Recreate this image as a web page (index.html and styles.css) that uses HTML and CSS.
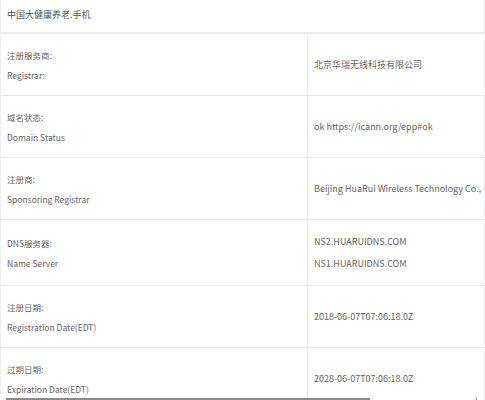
FILE: index.html
```html
<!DOCTYPE html>
<html lang="zh-CN">
<head>
<meta charset="utf-8">
<title>Whois</title>
<link rel="stylesheet" href="styles.css">
</head>
<body>
<div class="page">
  <div class="title">中国大健康养老.手机</div>
  <table class="info">
    <tr>
      <td class="label"><div>注册服务商:</div><div>Registrar:</div></td>
      <td class="value"><div>北京华瑞无线科技有限公司</div></td>
    </tr>
    <tr>
      <td class="label"><div>域名状态:</div><div>Domain Status</div></td>
      <td class="value"><div>ok https://icann.org/epp#ok</div></td>
    </tr>
    <tr>
      <td class="label"><div>注册商:</div><div>Sponsoring Registrar</div></td>
      <td class="value"><div>Beijing HuaRui Wireless Technology Co., Ltd.</div></td>
    </tr>
    <tr>
      <td class="label"><div>DNS服务器:</div><div>Name Server</div></td>
      <td class="value"><div>NS2.HUARUIDNS.COM</div><div>NS1.HUARUIDNS.COM</div></td>
    </tr>
    <tr>
      <td class="label"><div>注册日期:</div><div>Registration Date(EDT)</div></td>
      <td class="value"><div>2018-06-07T07:06:18.0Z</div></td>
    </tr>
    <tr>
      <td class="label"><div>过期日期:</div><div>Expiration Date(EDT)</div></td>
      <td class="value"><div>2028-06-07T07:06:18.0Z</div></td>
    </tr>
  </table>
  <div class="scrollbar"><div class="thumb"></div><div class="arrow"></div></div>
</div>
</body>
</html>
```

FILE: styles.css
```css
html, body {
  margin: 0;
  padding: 0;
  background: #fff;
}
body {
  width: 485px;
  height: 400px;
  overflow: hidden;
  font-family: "Noto Sans CJK SC", "Noto Sans", sans-serif;
  font-size: 9px;
  color: #666;
}
.page {
  position: relative;
  width: 485px;
  height: 400px;
  border-left: 1px solid #eef1f4;
  border-right: 1px solid #eef1f4;
  box-sizing: border-box;
  overflow: hidden;
}
.title {
  height: 32px;
  line-height: 30px;
  padding-left: 6px;
  font-size: 9px;
  color: #555;
  border-bottom: 2px solid #e8ecf0;
}
.info {
  border-collapse: collapse;
  table-layout: fixed;
  width: 560px;
}
.info td {
  border-bottom: 1px solid #e6eaee;
  vertical-align: middle;
  white-space: nowrap;
  padding: 11px 6px 10px;
}
.info td.label {
  width: 294px;
  line-height: 20px;
  font-size: 8.5px;
}
.info td.value {
  border-left: 1px solid #e6eaee;
  line-height: 22px;
  font-size: 9px;
}
.scrollbar {
  position: absolute;
  left: 5px;
  right: 0;
  bottom: 0;
  height: 3px;
}
.thumb {
  width: 364px;
  height: 2px;
  margin-top: 1px;
  background: #8a8a8a;
}
.arrow {
  position: absolute;
  right: 7px;
  top: 0;
  width: 1px;
  height: 3px;
  background: #bbb;
}
```
